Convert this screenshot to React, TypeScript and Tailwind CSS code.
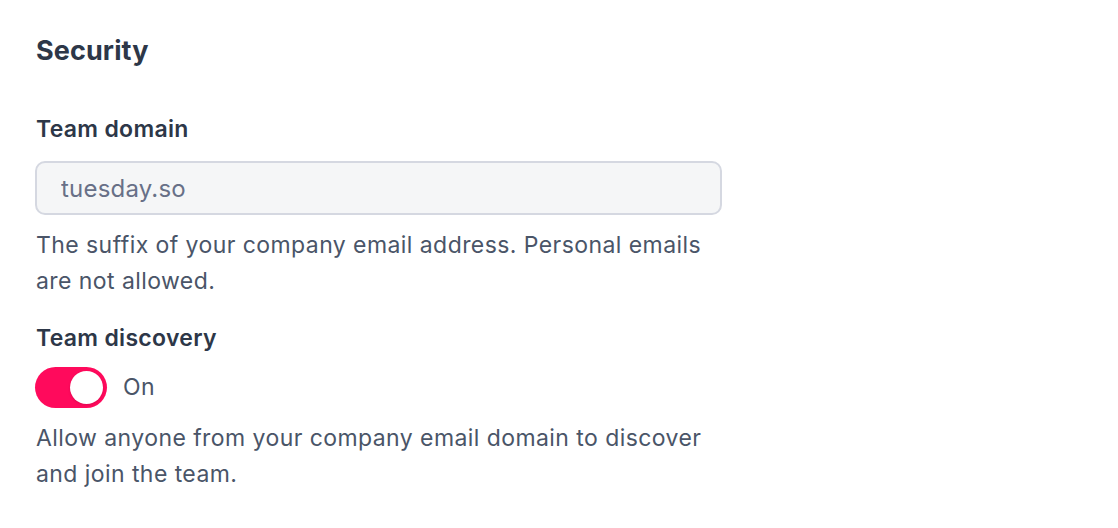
import React, { useState } from 'react';

export default function App() {
  const [discovery, setDiscovery] = useState(true);

  return (
    <div className="min-h-[528px] w-[1118px] bg-white font-['Inter',sans-serif]">
      <div className="w-[722px] pl-[35px] pt-[33px]">
        <h2 className="pl-[1px] text-[27px] font-bold leading-[36px] tracking-[0.1px] text-[#2d3748]">Security</h2>

        <label className="mt-[42px] block pl-[1px] text-[23px] font-semibold leading-[36px] tracking-[0.3px] text-[#2d3748]">
          Team domain
        </label>
        <input
          readOnly
          value="tuesday.so"
          className="mt-[14px] block h-[54px] w-[687px] rounded-[10px] border-2 border-[#d5d8e1] bg-[#f5f6f7] px-[24px] text-[24px] tracking-[0.2px] text-[#687087] outline-none"
        />
        <p className="mt-[12px] w-[687px] pl-[1px] text-[23px] leading-[36px] tracking-[0.43px] text-[#4a5568]">
          The suffix of your company email address. Personal emails are not allowed.
        </p>

        <label className="mt-[21px] block pl-[1px] text-[23px] font-semibold leading-[36px] tracking-[0.3px] text-[#2d3748]">
          Team discovery
        </label>
        <div className="mt-[11px] flex items-center gap-[16px]">
          <button
            onClick={() => setDiscovery(!discovery)}
            className={`flex h-[41px] w-[72px] items-center rounded-full p-[4px] ${
              discovery ? 'justify-end bg-[#ff0a5c]' : 'justify-start bg-[#cbd5e0]'
            }`}
          >
            <span className="h-[33px] w-[33px] rounded-full bg-white shadow-sm" />
          </button>
          <span className="text-[23px] tracking-[0.4px] text-[#4a5568]">{discovery ? 'On' : 'Off'}</span>
        </div>
        <p className="mt-[12px] w-[687px] pl-[1px] text-[23px] leading-[36px] tracking-[0.43px] text-[#4a5568]">
          Allow anyone from your company email domain to discover and join the team.
        </p>
      </div>
    </div>
  );
}
